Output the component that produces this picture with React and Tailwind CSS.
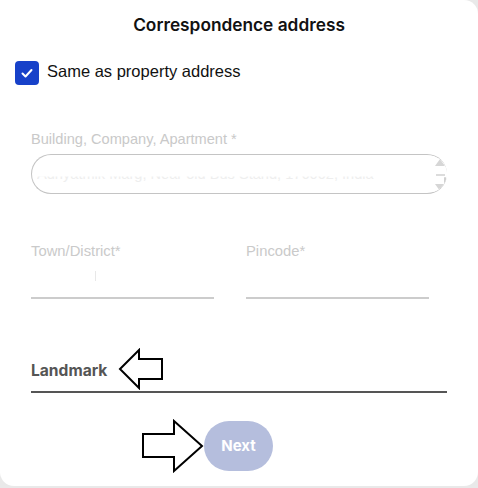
import React from "react";

export default function App() {
  return (
    <div className="w-[478px] h-[488px] bg-[#e9e9e9] overflow-hidden">
      <div className="relative w-[478px] h-[486px] bg-white rounded-tr-[14px] rounded-b-[14px] flex flex-col">
        <h1 className="pt-[13px] text-center text-[17.3px] leading-[24px] font-semibold text-[#111] [font-family:Inter,sans-serif]">
          Correspondence address
        </h1>

        <label className="mt-[24px] ml-[15px] flex items-center gap-[8px]">
          <span className="w-[24px] h-[24px] rounded-[4px] bg-[#1741c9] flex items-center justify-center">
            <svg width="14" height="14" viewBox="0 0 14 14" fill="none">
              <polyline points="2.5,7.5 5.5,10.5 11.5,4" stroke="white" strokeWidth="2" strokeLinecap="round" strokeLinejoin="round" />
            </svg>
          </span>
          <span className="mt-[-4px] text-[16.5px] leading-[20px] text-[#111] [font-family:'Liberation_Sans',Arial,sans-serif]">
            Same as property address
          </span>
        </label>

        <div className="mt-[44px] ml-[31px] w-[416px] [font-family:'Liberation_Sans',Arial,sans-serif]">
          <div className="text-[14.6px] leading-[20px] text-[#c9c9c9]">Building, Company, Apartment *</div>
          <div className="relative mt-[5px] h-[40px] rounded-full border border-[#c4c4c4] border-r-0 overflow-hidden">
            <div className="absolute left-[5px] top-[9px] text-[14.6px] leading-[20px] text-[#eeeeee] whitespace-nowrap [clip-path:inset(62%_0_0_0)]">
              Adhyatmik Marg, Near old Bus Stand, 176002, India
            </div>
            <div className="absolute right-0 top-0 w-[14px] h-[40px] bg-white flex flex-col items-center justify-between py-[4px]">
              <svg width="10" height="7" viewBox="0 0 10 7"><polygon points="5,0 10,7 0,7" fill="#d6d6d6" /></svg>
              <div className="w-[9px] h-[2px] bg-[#dcdcdc]" />
              <svg width="10" height="7" viewBox="0 0 10 7"><polygon points="0,0 10,0 5,7" fill="#d6d6d6" /></svg>
            </div>
            <div className="absolute right-[1px] top-[22px] w-[2px] h-[12px] bg-[#d0d0d0] rounded-full" />
          </div>
        </div>

        <div className="mt-[47px] ml-[31px] grid grid-cols-[183px_183px] gap-[32px] [font-family:'Liberation_Sans',Arial,sans-serif]">
          <div>
            <div className="text-[14.8px] leading-[20px] text-[#cacaca]">Town/District*</div>
            <div className="relative h-[38px] border-b-2 border-[#cccccc]">
              <div className="absolute left-[64px] top-[10px] w-px h-[10px] bg-[#e8e8e8]" />
            </div>
          </div>
          <div>
            <div className="text-[14.8px] leading-[20px] text-[#cacaca]">Pincode*</div>
            <div className="h-[38px] border-b-2 border-[#cccccc]" />
          </div>
        </div>

        <div className="mt-[62px] ml-[31px] w-[416px] border-b-2 border-[#555555] pb-[10px]">
          <div className="text-[15.6px] leading-[20px] font-bold text-[#555555] [font-family:Inter,sans-serif]">Landmark</div>
        </div>

        <div className="mt-[28px] flex justify-center">
          <button className="ml-[-1px] w-[69px] h-[50px] rounded-full bg-[#b5bedd] text-white text-[15px] font-bold [font-family:Inter,sans-serif]">
            Next
          </button>
        </div>

        <svg className="absolute left-[118px] top-[348px]" width="48" height="42" viewBox="0 0 48 42" fill="none">
          <polygon points="2,21 21,2 21,11 44,11 44,31 21,31 21,40" fill="white" stroke="black" strokeWidth="2" strokeLinejoin="miter" />
        </svg>

        <svg className="absolute left-[141px] top-[419px]" width="64" height="54" viewBox="0 0 64 54" fill="none">
          <polygon points="2,15 33,15 33,2 61,27 33,52 33,38 2,38" fill="white" stroke="black" strokeWidth="2" strokeLinejoin="miter" />
        </svg>
      </div>
    </div>
  );
}
